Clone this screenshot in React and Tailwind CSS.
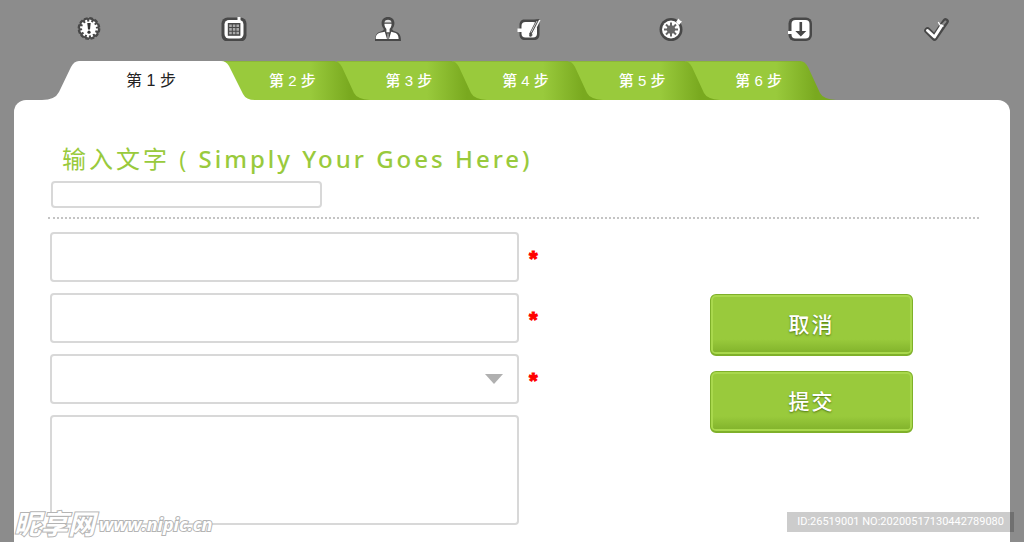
import { useState } from 'react'

const STEPS = [2, 3, 4, 5, 6]

const DARK = '#484848'

function BadgeIcon() {
  return (
    <svg className="w-6 h-6" viewBox="0 0 24 24">
      <circle cx="12" cy="11.5" r="10.600" fill={DARK} />
      <circle cx="12" cy="11.5" r="10.600" fill="none" stroke={DARK} strokeWidth="1.600" strokeDasharray="3.800 1.750" />
      <circle cx="12" cy="11.5" r="7" fill="#fff" />
      <circle cx="12" cy="11.5" r="7.600" fill="none" stroke="#fff" strokeWidth="2.600" strokeDasharray="2 1.980" />
      <path d="M10.300 6h3.400l-.7 6.500h-2z" fill="#333" />
      <circle cx="12" cy="15.200" r="1.600" fill="#333" />
    </svg>
  )
}

function PhoneIcon() {
  return (
    <svg className="w-[26px] h-6" viewBox="0 0 26 24">
      <rect x="0.5" y="0.5" width="25" height="24" rx="6" fill={DARK} />
      <rect x="3.5" y="3" width="19" height="18.5" rx="4.5" fill="#fff" />
      <path d="M16.5 0h3v4h-3z" fill="#fff" />
      <rect x="6.800" y="6" width="12.600" height="12.800" fill={DARK} />
      <path d="M8.2 7.500h2.600v2.600H8.200zM11.800 7.500h2.600v2.600h-2.600zM15.400 7.500h2.600v2.600h-2.600zM8.200 11.100h2.600v2.600H8.200zM11.800 11.100h2.600v2.600h-2.600zM15.400 11.100h2.600v2.600h-2.600zM8.200 14.700h2.600v2.600H8.200zM11.800 14.700h2.600v2.600h-2.600zM15.400 14.700h2.600v2.600h-2.600z" fill="#aaa" />
    </svg>
  )
}

function UserIcon() {
  return (
    <svg className="w-[26px] h-6" viewBox="0 0 26 24">
      <path d="M13 0C9 0 6.600 2.600 6.600 6c0 2.800 1 4.600 2.200 6-.2 1.400-1 1.800-3 2.400C2 15.600 0 17.500 0 24h26c0-6.500-2-8.400-5.800-9.600-2-.6-2.800-1-3-2.400 1.200-1.400 2.200-3.200 2.200-6 0-3.400-2.400-6-6.400-6z" fill={DARK} />
      <path d="M9.400 5.400C9.800 3.500 11.200 2.800 13 2.800s3.200.7 3.600 2.600z" fill="#ddd" />
      <path d="M9.400 6.800h7.200c0 2.400-1 4.200-2 5.200v3.200h-3.200V12c-1-1-2-2.800-2-5.200z" fill="#fff" />
      <path d="M9.800 14.800L12 22H0.800c-.2-4 1.700-5.400 4.200-6.200zM16.200 14.800L14 22h9.600c0-4-1.400-5.400-3.900-6.200z" fill="#fff" />
      <path d="M12.200 16.500h1.600V22h-1.600z" fill="#999" />
    </svg>
  )
}

function EditIcon() {
  return (
    <svg className="w-6 h-6" viewBox="0 0 24 24">
      <path d="M7.500 2.500h9.500l5.500-.5v15c0 4-2 6-5.500 6H8c-3.500 0-5.500-2-5.500-5.500V8c0-3.500 2-5.500 5-5.500z" fill={DARK} />
      <rect x="4.500" y="5" width="15.500" height="15.500" rx="4" fill="#fff" />
      <path d="M0.500 11.500h6V15h-6z" fill="#fff" />
      <path d="M21 3.500L13.500 18" stroke={DARK} strokeWidth="3.600" />
      <path d="M22.800 3L15.300 17.500" stroke="#fff" strokeWidth="1.600" />
      <path d="M20 4L14 15.500" stroke="#ccc" strokeWidth="1" />
      <circle cx="13.500" cy="18.500" r="1.300" fill={DARK} />
    </svg>
  )
}

function AsteriskIcon() {
  return (
    <svg className="w-6 h-6" viewBox="0 0 24 24">
      <circle cx="12" cy="12.500" r="11.500" fill={DARK} />
      <circle cx="12" cy="12.500" r="9" fill="#fff" />
      <path d="M17 5l2.500-3.500 1.500 2L23 4.500l-3 3.500z" fill="#fff" />
      <path d="M12 5.500v14M5 12.500h14M7 7.500l10 10M17 7.500l-10 10" stroke="#666" strokeWidth="2" />
      <circle cx="12" cy="12.500" r="4.200" fill="#666" />
    </svg>
  )
}

function DownloadIcon() {
  return (
    <svg className="w-6 h-6" viewBox="0 0 24 24">
      <rect x="0.500" y="0.500" width="23.500" height="23.500" rx="6" fill={DARK} />
      <rect x="3.500" y="3" width="18" height="18.500" rx="4" fill="#fff" />
      <path d="M0 14h5v3H0z" fill="#fff" />
      <path d="M11.500 5h2.600v9h4.200l-5.500 5.500L7.300 14h4.200z" fill={DARK} />
    </svg>
  )
}

function CheckIcon() {
  return (
    <svg className="w-6 h-6 overflow-visible" viewBox="0 0 24 24" fill="none" strokeLinecap="round" strokeLinejoin="round">
      <path d="M3.500 13.500l7 7L21.500 4.500" stroke={DARK} strokeWidth="6.600" />
      <path d="M18 8.500l3.500-4" stroke="#8c8c8c" strokeWidth="2" />
      <path d="M3.500 13.500l7 6.500L17.500 9" stroke="#fff" strokeWidth="3" />
      <path d="M14.500 5.500l1.500 2.500 3 1" stroke="#fff" strokeWidth="1.400" />
    </svg>
  )
}

const TOOLS = [
  { label: '提示', Icon: BadgeIcon },
  { label: '电话', Icon: PhoneIcon },
  { label: '用户', Icon: UserIcon },
  { label: '编辑', Icon: EditIcon },
  { label: '标记', Icon: AsteriskIcon },
  { label: '下载', Icon: DownloadIcon },
  { label: '完成', Icon: CheckIcon },
]

// Earlier tabs overlap later ones
const TAB_LAYERS = ['z-50', 'z-40', 'z-30', 'z-20', 'z-10']

function FieldRow({ id, children }) {
  return (
    <div className="flex items-center gap-[10px]">
      {children}
      <label htmlFor={id} className="pt-1 text-[22px] leading-5 font-bold text-[#ff0000] font-['Liberation_Sans'] [-webkit-text-stroke:1px_#ff0000]">*</label>
    </div>
  )
}

function ActionButton({ type, children }) {
  return (
    <button
      type={type}
      className="h-[62px] rounded-md border border-[#7fb02a] border-b-2 bg-linear-to-b from-[#99ca3c] from-75% to-[#80b12a] text-[21px] font-medium tracking-widest text-white text-shadow-[0_1px_2px_#4f7510] shadow-[inset_0_0_0_2px_#a9d84d] hover:brightness-105"
    >
      {children}
    </button>
  )
}

export default function App() {
  const [channel, setChannel] = useState('')

  return (
    <div className="relative min-h-screen flex flex-col overflow-hidden bg-[#8c8c8c] font-['Open_Sans','Noto_Sans_CJK_SC',sans-serif]">
      {/* Toolbar */}
      <nav className="h-[61px] pt-[17px] pl-[77px] pr-[76px] grid grid-cols-[144fr_154fr_142fr_142fr_129fr_136fr_24px] items-start">
        {TOOLS.map(({ label, Icon }) => (
          <button key={label} type="button" aria-label={label} className="justify-self-start">
            <Icon />
          </button>
        ))}
      </nav>

      {/* Step tabs */}
      <div className="flex h-[39px] pl-[50px] font-['Liberation_Sans','Noto_Sans_CJK_SC',sans-serif]">
        <button type="button" className="relative z-60 w-[184px] pt-px pl-[18px] text-base text-[#222222]">
          <svg className="absolute left-0 top-0 h-[39px] w-[184px] overflow-visible" viewBox="0 0 184 39">
            <path d="M-8 39Q5 39 9 31L21 6Q24 0 29 0H171Q176 0 179 5L193 33Q196 39 205 39Z" fill="#fff" />
          </svg>
          <span className="relative">第 1 步</span>
        </button>
        <div className="grid grid-cols-5 w-[583px]">
          {STEPS.map((n, i) => (
            <button key={n} type="button" className={`relative pt-px text-[15px] font-medium text-white ${TAB_LAYERS[i]}`}>
              <svg className="absolute left-0 top-0 h-[39px] w-[116px] overflow-visible" viewBox="0 0 116 39">
                <defs>
                  <linearGradient id={`tab-${n}`} gradientUnits="userSpaceOnUse" x1="76" y1="0" x2="116" y2="0">
                    <stop offset="0" stopColor="#99ca3c" />
                    <stop offset="1" stopColor="#79a91f" />
                  </linearGradient>
                </defs>
                <path d="M-14 0H100Q105 0 108 6L120 32Q123 38 136 39H-14Z" fill={`url(#tab-${n})`} />
                <path d="M-14 0.500H101" stroke="#7fa832" strokeOpacity="0.500" />
              </svg>
              <span className="relative">第 {n} 步</span>
            </button>
          ))}
        </div>
      </div>

      {/* Panel */}
      <main className="flex-1 mx-[14px] pt-[43px] pb-4 pl-[36px] pr-[31px] rounded-t-xl bg-white">
        <label htmlFor="title" className="block pl-3 text-2xl leading-8 tracking-[3px] text-[#99ca3c]">
          输入文字 ( <span className="font-medium font-['Noto_Sans']">Simply Your Goes Here)</span>
        </label>
        <input id="title" type="text" className="block w-[271px] h-[27px] mt-[6px] ml-px px-2 rounded border-2 border-[#d8d8d8] outline-none" />

        {/* Divider */}
        <hr className="mt-[9px] mb-[13px] -ml-[2px] border-0 border-t-2 border-dotted border-[#c4c4c4]" />

        <form className="flex items-start justify-between" onSubmit={e => e.preventDefault()}>
          <div className="flex flex-col gap-[11px]">
            <FieldRow id="name">
              <input id="name" type="text" className="w-[469px] h-[50px] px-3 rounded border-2 border-[#d8d8d8] outline-none" />
            </FieldRow>
            <FieldRow id="contact">
              <input id="contact" type="text" className="w-[469px] h-[50px] px-3 rounded border-2 border-[#d8d8d8] outline-none" />
            </FieldRow>
            <FieldRow id="channel">
              <div className="relative">
                <select
                  id="channel"
                  value={channel}
                  onChange={e => setChannel(e.target.value)}
                  className="block w-[469px] h-[50px] px-3 appearance-none rounded border-2 border-[#d8d8d8] bg-white outline-none"
                >
                  <option value=""></option>
                </select>
                <svg className="absolute right-4 top-5 w-[18px] h-[10px] pointer-events-none" viewBox="0 0 18 10">
                  <path d="M0 0h18L9 10z" fill="#b0b0b0" />
                </svg>
              </div>
            </FieldRow>
            <textarea aria-label="备注" className="w-[469px] h-[110px] p-3 resize-none rounded border-2 border-[#d8d8d8] outline-none" />
          </div>
          <div className="flex flex-col gap-[15px] w-[203px] mt-[62px] mr-[66px]">
            <ActionButton type="button">取消</ActionButton>
            <ActionButton type="submit">提交</ActionButton>
          </div>
        </form>
      </main>

      {/* Site marks */}
      <div className="absolute left-[14px] bottom-[6px] flex items-center gap-1 italic font-bold text-white [-webkit-text-stroke:2px_#b4b4b4] [paint-order:stroke_fill]">
        <span className="text-[27px] leading-6">昵享网</span>
        <span className="text-lg leading-6">www.nipic.cn</span>
      </div>
      <div className="absolute right-[10px] bottom-[10px] h-5 px-[10px] bg-black/20 font-['Roboto'] text-[11px] leading-5 text-white">
        ID:26519001 NO:20200517130442789080
      </div>
    </div>
  )
}
